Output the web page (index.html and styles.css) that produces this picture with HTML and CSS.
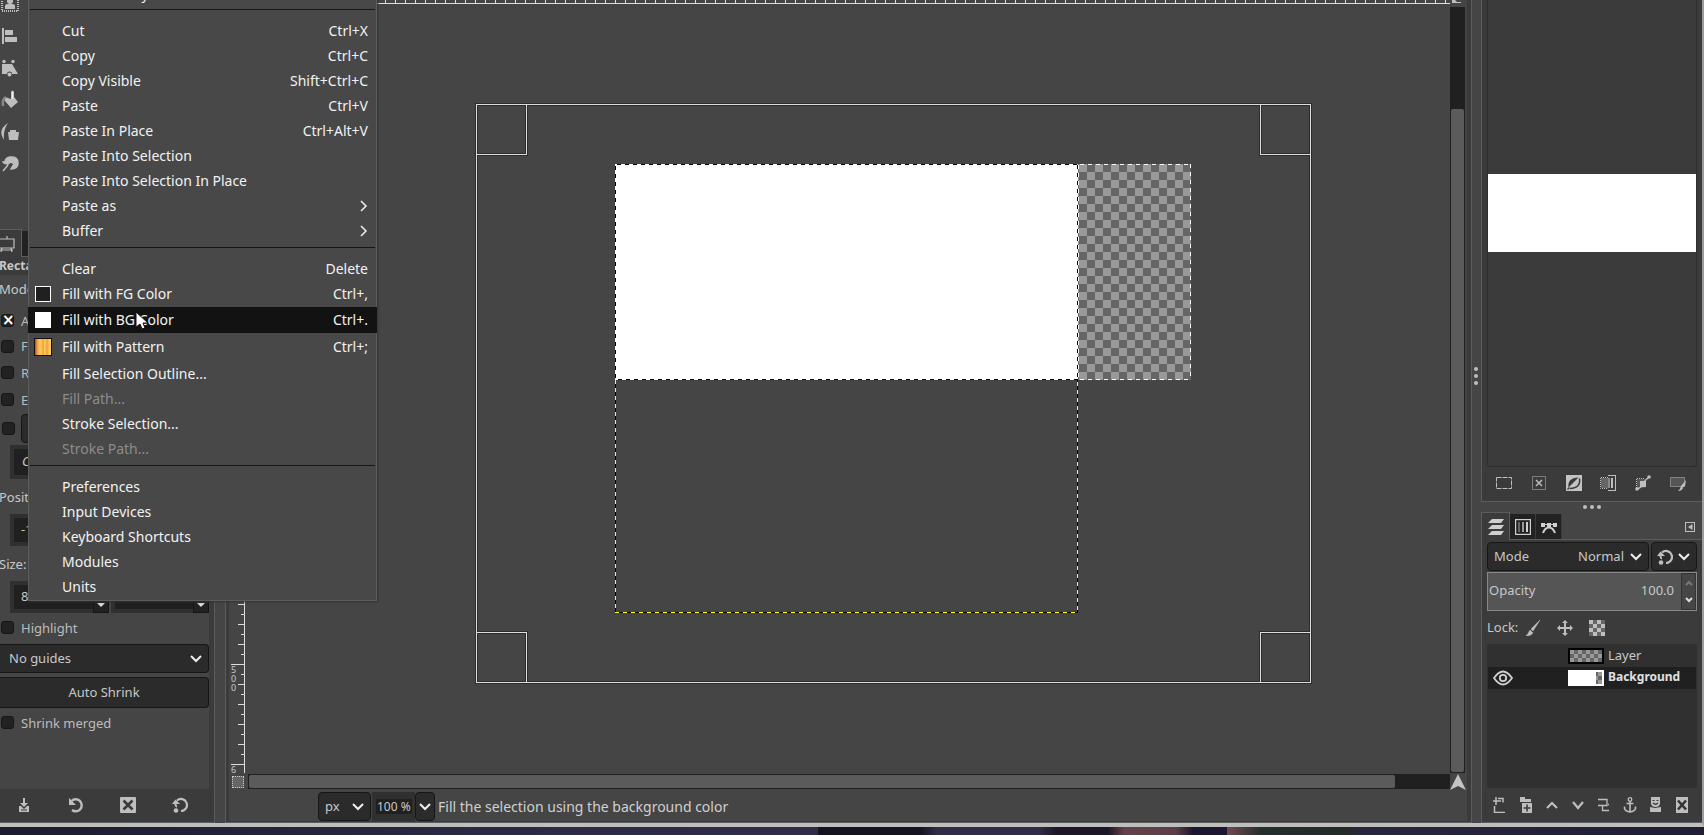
FILE: index.html
```html
<!DOCTYPE html>
<html lang="en">
<head>
<meta charset="utf-8">
<title>Image Editor</title>
<link rel="stylesheet" href="styles.css">
</head>
<body>
<svg class="defs" aria-hidden="true">
  <defs>
    <pattern id="checks" x="1079" y="164" width="16" height="16" patternUnits="userSpaceOnUse">
      <rect width="16" height="16" fill="#999"/><path d="M8 0h8v8H8zM0 8h8v8H0z" fill="#666"/>
    </pattern>
    <pattern id="smallChecks" x="2" y="2" width="8" height="8" patternUnits="userSpaceOnUse">
      <rect width="8" height="8" fill="#999"/><path d="M4 0h4v4H4zM0 4h4v4H0z" fill="#666"/>
    </pattern>
    <pattern id="ticks" x="7" y="0" width="10" height="4" patternUnits="userSpaceOnUse">
      <path d="M3 0h1v4H3z" fill="#ddd"/>
    </pattern>
    <pattern id="sideTicks" x="0" y="664" width="16" height="20" patternUnits="userSpaceOnUse">
      <path d="M9 0h6v1H9zM12 10h3v1h-3z" fill="#ddd"/>
    </pattern>
    <symbol id="chev" viewBox="0 0 12 8"><path d="M1 1l5 5 5-5" fill="none" stroke="#eee" stroke-width="2"/></symbol>
    <symbol id="reset" viewBox="0 0 16 16"><path d="M5 3.500A6 6 0 1 1 9 14" fill="none" stroke="#bebebe" stroke-width="2.200"/><path d="M0 7l3.500-4.500L8 7z" fill="#bebebe"/><path d="M3.500 5.500v2c0 1 1 2 1.500 2" fill="none" stroke="#bebebe" stroke-width="2"/><circle cx="4" cy="13.500" r="2.300" fill="#bebebe"/></symbol>
  </defs>
</svg>
<div class="window">
  <aside class="dock-left">
    <div class="tools">
      <button aria-label="Foreground select"><svg viewBox="0 0 20 20"><path d="M2 1v16h16V1" fill="none" stroke="#bebebe" stroke-width="2" stroke-dasharray="1 1"/><circle cx="10" cy="7" r="3" fill="#bebebe"/><path d="M5 15v-3q0-2 3-2h4q3 0 3 2v3z" fill="#bebebe"/></svg></button>
      <button aria-label="Align"><svg viewBox="0 0 20 20"><path d="M2 2h2v16H2zM5 4h8v5H5zM5 11h12v5H5z" fill="#bebebe"/></svg></button>
      <button aria-label="Transform"><svg viewBox="0 0 20 20"><path d="M2 6h10l6 10h-6a2.500 2.500 0 0 0-5 0H2z" fill="#bebebe"/><circle cx="4" cy="3.500" r="1.700" fill="#bebebe"/><circle cx="13" cy="3.500" r="1.700" fill="#bebebe"/><circle cx="9.500" cy="16.500" r="2" fill="#bebebe"/></svg></button>
      <button aria-label="Bucket fill"><svg viewBox="0 0 20 20"><path d="M5 7l6 2V2a1 1 0 0 1 3 0v5l4 5-7 6-6-7z" fill="#bebebe"/><path d="M6 7q-4 2-3 9" fill="none" stroke="#888" stroke-width="2.500"/><path d="M12.500 2v7" stroke="#eee" stroke-width="1.500"/></svg></button>
      <button aria-label="Clone"><svg viewBox="0 0 20 20"><path d="M8 1Q-3 8 4 18Q3 8 8 1zM10 8h6v2h3l-1 8h-9l-1-8h2z" fill="#bebebe"/></svg></button>
      <button aria-label="Smudge"><svg viewBox="0 0 20 20"><path d="M3 17l5-6M5 8q0-4 5-5 8-1 8 6 0 6-7 6l3-5-3-2-3 2q-4 0-5-2z" fill="#bebebe" stroke="#bebebe" stroke-width="1.500"/></svg></button>
    </div>
    <div class="tabs">
      <button class="tab active" aria-label="Tool options"><svg width="20" height="16" viewBox="0 0 20 16"><path d="M-1 3h15v9H-1zM7 0v3M2 12l-1 4M11 12l1 4M0 14h13" fill="none" stroke="#bebebe" stroke-width="1.200"/></svg></button>
      <button class="tab" aria-label="Devices"><svg width="14" height="16" viewBox="0 0 14 16"><path d="M1 13l4-9v9M2 9h3" fill="none" stroke="#bebebe" stroke-width="1.500"/></svg></button>
    </div>
    <div class="options">
      <h2>Rectangle Select</h2>
      <p class="mode-line">Mode:</p>
      <label class="check first"><input type="checkbox" checked>Antialiasing</label>
      <label class="check feather"><input type="checkbox">Feather edges</label>
      <label class="check"><input type="checkbox">Rounded corners</label>
      <label class="check"><input type="checkbox">Expand from center</label>
      <div class="check fixed"><input type="checkbox" aria-label="Fixed"><button>Fixed</button></div>
      <input class="entry current" aria-label="Current" value="Current">
      <label class="cap" for="posx">Position:</label>
      <input class="entry" id="posx" value="-1">
      <label class="cap" for="sizew">Size:</label>
      <div class="pair">
        <div class="spin"><input id="sizew" value="800"><button aria-label="Decrease width"></button></div>
        <div class="spin"><input aria-label="Height" value=""><button aria-label="Decrease height"></button></div>
      </div>
      <label class="check tall"><input type="checkbox">Highlight</label>
      <div class="select guides"><select aria-label="Guides"><option>No guides</option></select><svg class="chev"><use href="#chev"/></svg></div>
      <button class="shrink">Auto Shrink</button>
      <label class="check tall"><input type="checkbox">Shrink merged</label>
    </div>
    <div class="foot">
      <button aria-label="Save preset"><svg viewBox="0 0 16 16"><path d="M7 1h2v5h3L8 10 4 6h3zM3 9h2l3 3 3-3h2v6H3z" fill="#bebebe"/><path d="M5 13h6" stroke="#3b3b3b"/></svg></button>
      <button aria-label="Restore preset"><svg viewBox="0 0 16 16"><path d="M3.500 4A6 6 0 1 1 4 13" fill="none" stroke="#bebebe" stroke-width="2.400"/><path d="M1 1v7h7z" fill="#bebebe"/></svg></button>
      <button aria-label="Delete preset"><svg viewBox="0 0 16 16"><rect width="16" height="16" rx="1" fill="#bebebe"/><path d="M3.500 3.500l9 9M12.500 3.500l-9 9" stroke="#3b3b3b" stroke-width="2.600"/></svg></button>
      <button aria-label="Reset"><svg><use href="#reset"/></svg></button>
    </div>
  </aside>

  <main class="editor">
    <div class="view">
      <svg class="ruler-top"><rect width="100%" height="4" fill="url(#ticks)"/><path d="M0 3h3000v1H0z" fill="#ddd"/></svg>
      <div class="ruler-side">
        <svg viewBox="0 4 16 769" width="16" height="769"><rect y="4" width="16" height="769" fill="url(#sideTicks)"/><path d="M15 4h1v769h-1zM2 664h13v1H2zM2 764h13v1H2z" fill="#ddd"/>
          <g class="ruler-num"><text x="2" y="673">5</text><text x="2" y="682">0</text><text x="2" y="691">0</text><text x="2" y="773">6</text></g></svg>
      </div>
      <div class="canvas">
        <svg viewBox="245 4 1205 769" width="1205" height="769" shape-rendering="crispEdges">
          <g fill="none" stroke="#2c2c2c" stroke-width="3"><path d="M476.500 104.500h834v578h-834zM526.500 104.500v50h-50M1260.500 104.500v50h50M526.500 682.500v-50h-50M1260.500 682.500v-50h50"/></g>
          <path d="M476.500 104.500h834v578h-834zM526.500 104.500v50h-50M1260.500 104.500v50h50M526.500 682.500v-50h-50M1260.500 682.500v-50h50" fill="none" stroke="#ddd"/>
          <rect x="615" y="164" width="463" height="216" fill="#fff"/>
          <rect x="1078" y="164" width="113" height="216" fill="url(#checks)"/>
          <g fill="none" stroke-dasharray="4 4">
            <path d="M617 164.500h461M615.500 166v214M1077.500 165v215M618 379.500h460" stroke="#000"/>
            <path d="M1080 164.500h111M1190.500 164v216M1080 379.500h111M1078.500 165v215" stroke="#fff"/>
          </g>
          <path d="M615.500 380v232.500h462V380" fill="none" stroke="#000"/>
          <path d="M615.500 380v232M615 612.500h462M1077.500 382v230" fill="none" stroke="#ff0" stroke-dasharray="4 4"/>
        </svg>
      </div>
      <div class="vscroll">
        <svg class="zoomfit" viewBox="0 0 15 7"><path d="M2 3V0h3l2 2h4v1z" fill="#bebebe"/></svg>
        <div class="vtrack"><div class="vthumb"></div></div>
      </div>
      <button class="quickmask" aria-label="Quick mask"></button>
      <div class="htrack"><div class="hthumb"></div></div>
      <button class="nav" aria-label="Navigate"><svg width="16" height="16" viewBox="0 0 16 16"><path d="M8 0l8 16-8-4-8 4z" fill="#c4c4c4"/></svg></button>
    </div>
    <div class="status">
      <div class="select unit"><select aria-label="Unit"><option>px</option></select><svg class="chev"><use href="#chev"/></svg></div>
      <div class="zoombox"><input aria-label="Zoom" value="100 %"></div>
      <button class="zoomdrop" aria-label="Zoom levels"><svg class="chev"><use href="#chev"/></svg></button>
      <span class="message">Fill the selection using the background color</span>
    </div>
  </main>

  <div class="grip" aria-hidden="true"><i></i><i></i><i></i></div>

  <aside class="dock-right">
    <section class="panel selection">
      <div class="preview"><div class="preview-image"></div></div>
      <div class="icons six">
        <button aria-label="Select all"><svg viewBox="0 0 16 16"><rect x=".5" y="2.500" width="15" height="11" fill="none" stroke="#bebebe" stroke-dasharray="5 1"/></svg></button>
        <button aria-label="Select none"><svg viewBox="0 0 16 16"><rect x="1.500" y="1.500" width="13" height="13" fill="none" stroke="#bebebe" stroke-dasharray="1 1"/><path d="M5 5l6 6M11 5l-6 6" stroke="#bebebe" stroke-width="1.500"/></svg></button>
        <button aria-label="Invert"><svg viewBox="0 0 16 16"><rect width="16" height="16" fill="#c4c4c4"/><path d="M2.500 12.500Q1 3 12.500 2.500z" fill="#3b3b3b"/><path d="M13.500 3.500Q15 13 4 13.500M1.500 14.500l2-2" fill="none" stroke="#3b3b3b" stroke-width="1.500"/></svg></button>
        <button aria-label="Save to channel"><svg viewBox="0 0 16 16"><path d="M1 3h7v10H1z" fill="#666"/><path d="M8 2.500H.5v11H8" fill="none" stroke="#bebebe" stroke-dasharray="1 1"/><path d="M8 3h2v10H8z" fill="#888"/><path d="M11 3h2v10h-2zM8 0h8v16H8v-1h7V1H8z" fill="#bebebe"/></svg></button>
        <button aria-label="To path"><svg viewBox="0 0 16 16"><path d="M9 3.500H1.500v10" fill="none" stroke="#bebebe" stroke-dasharray="1 1"/><path d="M2 4h8v9H2z" fill="#555"/><path d="M2 14Q6 13 8 9t6-7" fill="none" stroke="#bebebe" stroke-width="1.500"/><path d="M5 6h6v6H5z" fill="#bebebe"/><circle cx="14" cy="2" r="1.800" fill="#bebebe"/><circle cx="2" cy="14" r="1.800" fill="#bebebe"/></svg></button>
        <button aria-label="Stroke selection"><svg viewBox="0 0 16 16"><rect x=".5" y="2.500" width="14" height="9" fill="#555" stroke="#bebebe" stroke-dasharray="1 1"/><path d="M16 5l-1 6-3 2-1-2zM11 11l2 2q-1 3-5 3 2-1 3-5z" fill="#bebebe"/></svg></button>
      </div>
    </section>
    <div class="hgrip" aria-hidden="true"><i></i><i></i><i></i></div>
    <section class="layers">
      <div class="tabs">
        <button class="tab active" aria-label="Layers"><svg width="16" height="16" viewBox="0 0 16 16"><path d="M4 0h12l-3 4H0zM4 6h12l-3 4H0zM4 12h12l-3 4H0z" fill="#cfcfcf"/></svg></button>
        <button class="tab" aria-label="Channels"><svg width="16" height="16" viewBox="0 0 16 16"><rect x=".6" y=".6" width="14.800" height="14.800" fill="none" stroke="#d0d0d0" stroke-width="1.200"/><path d="M3 3h2v10H3z" fill="#666"/><path d="M7 3h2v10H7z" fill="#999"/><path d="M11 3h2v10h-2z" fill="#d0d0d0"/></svg></button>
        <button class="tab" aria-label="Paths"><svg width="16" height="16" viewBox="0 0 16 16"><path d="M0 4h4v1h2V4h4v1h2V4h4v4h-4V6h-2v2H6V6H4v2H0z" fill="#cfcfcf"/><path d="M2 14Q4 8.500 8 8.500t6 5.500" fill="none" stroke="#cfcfcf" stroke-width="2"/></svg></button>
        <button class="dockmenu" aria-label="Configure this tab"><svg width="10" height="10" viewBox="0 0 10 10"><rect x=".5" y=".5" width="9" height="9" fill="none" stroke="#bebebe"/><path d="M7.500 2v6L3 5z" fill="#bebebe"/></svg></button>
      </div>
      <div class="layer-body">
        <div class="moderow">
          <div class="select modeselect"><label for="mode">Mode</label><select id="mode"><option>Normal</option></select><svg class="chev"><use href="#chev"/></svg></div>
          <button class="modeswitch" aria-label="Switch mode group"><svg width="16" height="16"><use href="#reset"/></svg><svg class="chev"><use href="#chev"/></svg></button>
        </div>
        <div class="opacity">
          <label for="opacity">Opacity</label><input id="opacity" value="100.0">
          <div class="updown"><button aria-label="Increase"><svg width="8" height="6" viewBox="0 0 8 6"><path d="M1 5l3-3 3 3" fill="none" stroke="#777" stroke-width="2"/></svg></button><button aria-label="Decrease"><svg width="8" height="6" viewBox="0 0 8 6"><path d="M1 1l3 3 3-3" fill="none" stroke="#ddd" stroke-width="2"/></svg></button></div>
        </div>
        <div class="lock"><span>Lock:</span>
          <button aria-label="Lock pixels"><svg viewBox="0 0 16 16"><path d="M15 0L6 9l2 2zM5 10l3 3q-2 3-7 3 2-2 4-6z" fill="#bebebe" stroke="#bebebe" stroke-width=".5"/></svg></button>
          <button aria-label="Lock position"><svg viewBox="0 0 16 16"><path d="M8 1v14M1 8h14" stroke="#bebebe" stroke-width="2"/><path d="M8 0l3 3H5zM8 16l3-3H5zM0 8l3-3v6zM16 8l-3-3v6z" fill="#bebebe"/></svg></button>
          <button aria-label="Lock alpha"><svg viewBox="0 0 16 16"><rect width="16" height="16" fill="#666"/><path d="M0 0h4v4H0zM8 0h4v4H8zM4 4h4v4H4zM12 4h4v4h-4zM0 8h4v4H0zM8 8h4v4H8zM4 12h4v4H4zM12 12h4v4h-4z" fill="#bebebe"/></svg></button>
        </div>
        <ul class="list">
          <li><span class="eye"></span><svg width="36" height="16"><rect width="36" height="16" fill="#000"/><rect x="2" y="2" width="32" height="12" fill="url(#smallChecks)"/></svg><span>Layer</span></li>
          <li class="current-layer"><span class="eye"><svg width="20" height="16" viewBox="0 0 20 16"><path d="M1 8q9-13 18 0-9 13-18 0z" fill="none" stroke="#cfcfcf" stroke-width="1.800"/><circle cx="10" cy="8" r="3.200" fill="none" stroke="#cfcfcf" stroke-width="1.800"/></svg></span><svg width="36" height="16"><rect width="36" height="16" fill="#fff"/><path d="M28 2h6v12h-6z" fill="#666"/><path d="M30 2h4v4h-4zM28 6h2v4h-2zM30 10h4v4h-4z" fill="#999"/></svg><span>Background</span></li>
        </ul>
        <div class="icons eight">
          <button aria-label="New layer"><svg viewBox="0 0 16 16"><path d="M6 1.500h5v4M1 4h8M4 0v8M2.500 9v6.500H13" fill="none" stroke="#bebebe" stroke-width="1.500"/></svg></button>
          <button aria-label="New group"><svg viewBox="0 0 16 16"><path d="M2 0h5v2h6v3H2zM4 6h10v10H4z" fill="#bebebe"/><path d="M9 7.500v7M5.500 11h7" stroke="#3b3b3b" stroke-width="1.600"/></svg></button>
          <button aria-label="Raise"><svg viewBox="0 0 16 16"><path d="M3 11l5-5 5 5" fill="none" stroke="#bebebe" stroke-width="2.200"/></svg></button>
          <button aria-label="Lower"><svg viewBox="0 0 16 16"><path d="M3 5l5 6 5-6" fill="none" stroke="#bebebe" stroke-width="2.200"/></svg></button>
          <button aria-label="Duplicate"><svg viewBox="0 0 16 16"><path d="M2 2.500h9v6H2M6.500 9v4.500H13M13 7.500h-1" fill="none" stroke="#bebebe" stroke-width="1.300"/></svg></button>
          <button aria-label="Anchor"><svg viewBox="0 0 16 16"><circle cx="8" cy="2.500" r="1.800" fill="none" stroke="#bebebe" stroke-width="1.300"/><path d="M8 4v11M4.500 6.500h7M2.500 9.500v2q1 3 5.500 3.500 4.500-.5 5.500-3.500v-2" fill="none" stroke="#bebebe" stroke-width="1.600"/></svg></button>
          <button aria-label="Add mask"><svg viewBox="0 0 16 16"><path d="M3 0h9v7q-1 3-4.500 3T3 7zM2 10l5 1 6-1v5H2z" fill="#bebebe"/><path d="M4.500 3.500h2M8.500 3.500h2M5 6q2.500 2.500 5 0" fill="none" stroke="#3b3b3b" stroke-width="1.200"/></svg></button>
          <button aria-label="Delete layer"><svg viewBox="0 0 16 16"><path d="M2 0h12v16H2z" fill="#bebebe"/><path d="M4 3.500l8 9M12 3.500l-8 9" stroke="#333" stroke-width="2.600"/></svg></button>
        </div>
      </div>
    </section>
  </aside>
</div>
<div class="wallpaper"></div>

<div class="menu" role="menu">
  <button role="menuitem">Undo History</button>
  <hr class="top">
  <button role="menuitem">Cut<kbd>Ctrl+X</kbd></button>
  <button role="menuitem">Copy<kbd>Ctrl+C</kbd></button>
  <button role="menuitem">Copy Visible<kbd>Shift+Ctrl+C</kbd></button>
  <button role="menuitem">Paste<kbd>Ctrl+V</kbd></button>
  <button role="menuitem">Paste In Place<kbd>Ctrl+Alt+V</kbd></button>
  <button role="menuitem">Paste Into Selection</button>
  <button role="menuitem">Paste Into Selection In Place</button>
  <button role="menuitem">Paste as<svg class="sub" viewBox="0 0 8 12"><path d="M1 1l5 5-5 5" fill="none" stroke="#eee" stroke-width="1.500"/></svg></button>
  <button role="menuitem">Buffer<svg class="sub" viewBox="0 0 8 12"><path d="M1 1l5 5-5 5" fill="none" stroke="#eee" stroke-width="1.500"/></svg></button>
  <hr>
  <button role="menuitem">Clear<kbd>Delete</kbd></button>
  <button role="menuitem" class="fgrow"><i class="swatch fg"></i>Fill with FG Color<kbd>Ctrl+,</kbd></button>
  <button role="menuitem" class="hot"><i class="swatch bg"></i>Fill with BG Color<kbd>Ctrl+.</kbd>
    <svg class="pointer" viewBox="0 0 14 20"><path d="M1 1v15l4-3 2 5 3-1-2-5h5z" fill="#fff" stroke="#111"/></svg></button>
  <button role="menuitem" class="pat"><i class="swatch wood"></i>Fill with Pattern<kbd>Ctrl+;</kbd></button>
  <button role="menuitem">Fill Selection Outline...</button>
  <button role="menuitem" disabled>Fill Path...</button>
  <button role="menuitem">Stroke Selection...</button>
  <button role="menuitem" disabled>Stroke Path...</button>
  <hr>
  <button role="menuitem">Preferences</button>
  <button role="menuitem">Input Devices</button>
  <button role="menuitem">Keyboard Shortcuts</button>
  <button role="menuitem">Modules</button>
  <button role="menuitem">Units</button>
</div>
</body>
</html>
```
FILE: styles.css
```css
* { box-sizing: border-box; }
html, body { height: 100%; }
body {
  margin: 0;
  display: flex;
  flex-direction: column;
  position: relative;
  overflow: hidden;
  background: #454545;
  color: #c8c8c8;
  font: 13px/16px "Noto Sans", "Open Sans", sans-serif;
}
button, input, select {
  font: inherit;
  color: inherit;
  background: none;
  border: 0;
  padding: 0;
  margin: 0;
  outline: 0;
  border-radius: 0;
  appearance: none;
}
svg { display: block; flex: none; }
.defs { position: absolute; width: 0; height: 0; }
.chev { width: 12px; height: 8px; pointer-events: none; }

.window {
  flex: 1;
  min-height: 0;
  display: flex;
  border-bottom: 4px solid #bcbfbc;
  border-right: 2px solid #9c9c9c;
}
.wallpaper {
  height: 8px;
  flex: none;
  background: linear-gradient(90deg, #1c1c30 0, #2c2944 30%, #302c48 48%, #15131f 48%, #15131f 54%, #302c48 55%, #302c48 61%, #1c1626 62%, #1c1626 65%, #64414a 66%, #5c3d48 69%, #1c1630 70%, #1c1630 72%, #704850 72%, #242e2c 74%, #222a28 79%, #28253e 80%, #201e34 100%);
}

/* left dock */
.dock-left {
  width: 215px;
  flex: none;
  display: flex;
  flex-direction: column;
  background: #3b3b3b;
  border-right: 1px solid #5c5c5c;
  border-bottom: 1px solid #5c5c5c;
  overflow: hidden;
}
.tools { height: 229px; padding-right: 5px; overflow: hidden; flex: none; background: #454545; display: flex; flex-direction: column; justify-content: flex-start; }
.tools button { height: 32px; width: 20px; flex: none; }
.tools button:first-child { margin-top: -12px; }
.tools svg { width: 20px; height: 20px; }
.tabs { display: flex; height: 28px; flex: none; align-items: flex-end; background: #454545; border-bottom: 1px solid #5c5c5c; }
.tab { height: 25px; width: 26px; background: #222; display: flex; align-items: center; justify-content: center; border-right: 1px solid #3b3b3b; }
.tab.active { height: 28px; margin-bottom: -1px; background: #3b3b3b; border: 1px solid #5c5c5c; border-bottom: 0; }
.dock-left .tab.active { width: 22px; border-left: 0; justify-content: flex-start; }
.options { flex: 1; margin-right: 5px; background: #454545; min-height: 0; white-space: nowrap; }
.options h2 { margin: 0; background: #3b3b3b; font-size: 12px; line-height: 18px; text-indent: -1px; }
.mode-line { margin: 0; line-height: 29px; padding-bottom: 4px; text-indent: -1px; }
.check { display: flex; align-items: center; gap: 7px; height: 27px; padding-left: 1px; color: #bcbcbc; }
.check.first { height: 25px; }
.check.feather { height: 26px; }
.check.fixed { height: 30px; padding-left: 2px; gap: 6px; }
.check.fixed button { height: 29px; flex: 1; background: #2b2b2b; border: 1px solid #161616; border-radius: 4px; }
.check.tall { height: 29px; }
.check input { width: 13px; height: 13px; flex: none; background: #222; border: 1px solid #161616; border-radius: 3px; display: grid; place-items: center; }
.check input:checked::before { content: "×"; color: #fff; font: bold 15px/11px "DejaVu Sans", sans-serif; }
.entry, .spin { display: block; background: #202020; border: 4px solid #303030; height: 32px; width: 199px; margin-left: 10px; padding-left: 7px; padding-bottom: 2px; }
.entry.current { margin-top: 2px; height: 34px; font-style: italic; padding-left: 8px; }
.cap { display: block; height: 35px; line-height: 37px; text-indent: -1px; }
.pair { display: flex; gap: 2px; margin-left: 10px; }
.spin { flex: 1; min-width: 0; width: auto; margin: 0; display: flex; position: relative; }
.spin input { width: 60px; }
.spin button { position: absolute; right: -4px; bottom: -4px; width: 16px; height: 16px; background: #222; border: 1px solid #161616; display: grid; place-items: center; }
.spin button::before { content: ""; border: 4px solid transparent; border-top-color: #ddd; border-bottom: 0; }
.select { position: relative; background: #2b2b2b; border: 1px solid #161616; border-radius: 4px; display: flex; align-items: center; }
.select select { flex: 1; min-width: 0; height: 100%; padding: 0 0 2px 9px; }
.select .chev { position: absolute; right: 6px; }
.guides { height: 29px; margin: 2px 0 4px; border-left: 0; border-radius: 0 4px 4px 0; }
.shrink { display: block; width: 100%; height: 31px; padding-bottom: 2px; background: #2b2b2b; border: 1px solid #161616; border-left: 0; border-radius: 0 4px 4px 0; }
.foot { height: 33px; flex: none; display: grid; grid-template-columns: repeat(4, 52px); padding-bottom: 2px; margin-left: -2px; }
.foot button { display: grid; place-items: center; }
.foot svg { width: 16px; height: 16px; }

/* image window */
.editor {
  flex: 1;
  min-width: 0;
  display: flex;
  flex-direction: column;
  margin-left: 10px;
  border: 1px solid #5c5c5c;
  border-top: 0;
  padding: 0 4px 1px 3px;
  background: #3b3b3b;
}
.view {
  flex: 1;
  min-height: 0;
  background: #454545;
  display: grid;
  grid-template-columns: 16px minmax(0, 1fr) 15px 2px;
  grid-template-rows: 4px minmax(0, 1fr) 17px;
}
.ruler-top { grid-column: 2; grid-row: 1; width: 100%; height: 4px; }
.ruler-side { grid-column: 1; grid-row: 1 / 3; overflow: hidden; padding-top: 4px; }
.ruler-num { font: 9px "Noto Sans", sans-serif; fill: #c8c8c8; }
.canvas { grid-column: 2; grid-row: 2; overflow: hidden; }
.vscroll { grid-column: 3; grid-row: 1 / 3; display: flex; flex-direction: column; }
.zoomfit { width: 15px; height: 7px; }
.vtrack { flex: 1; min-height: 0; background: #202020; padding: 102px 1px 1px; }
.vthumb { height: 100%; background: #5b5b5b; border-radius: 2px; }
.quickmask { grid-column: 1; grid-row: 3; align-self: center; margin-left: 3px; width: 12px; height: 12px; background: #666; border: 1px dotted #ccc; }
.htrack { grid-column: 2; grid-row: 3; margin: 1px 0 1px 3px; background: #202020; padding: 1px 55px 1px 1px; }
.hthumb { height: 100%; background: #5b5b5b; border-radius: 2px; }
.nav { grid-column: 3 / 5; grid-row: 3; }
.status { height: 31px; flex: none; display: flex; align-items: flex-start; padding: 2px 0 0 89px; background: #454545; }
.unit { width: 53px; height: 29px; margin-right: 1px; }
.unit select { padding-left: 6px; }
.zoombox { width: 43px; height: 29px; background: #303030; padding: 7px 4px 7px; }
.zoombox input { display: block; width: 36px; height: 15px; background: #202020; font-size: 12px; text-indent: 1px; }
.zoomdrop { width: 20px; height: 29px; background: #2b2b2b; border: 1px solid #161616; border-radius: 4px; display: grid; place-items: center; }
.message { font-size: 14px; line-height: 29px; padding-left: 3px; color: #d0d0d0; white-space: nowrap; }

.grip { width: 9px; flex: none; display: flex; flex-direction: column; gap: 3px; align-items: center; justify-content: center; padding: 0 1px 71px 0; }
.grip i, .hgrip i { width: 4px; height: 4px; border-radius: 2px; background: #bebebe; }

/* right dock */
.dock-right { width: 221px; flex: none; display: flex; flex-direction: column; }
.selection { flex: none; height: 502px; border: 1px solid #5c5c5c; border-width: 0 0 1px 1px; background: #3b3b3b; padding: 0 5px; display: flex; flex-direction: column; }
.preview { flex: 1; border: 1px solid #2e2e2e; border-top: 0; border-radius: 0 0 3px 3px; padding-top: 174px; }
.preview-image { height: 78px; background: #fff; }
.icons { display: grid; height: 34px; }
.icons button { display: grid; place-items: center; }
.icons svg { width: 16px; height: 16px; }
.six { grid-template-columns: repeat(6, 1fr); padding: 0 2px 2px 0; }
.eight { grid-template-columns: repeat(8, 1fr); flex: none; padding-right: 2px; }
.hgrip { height: 10px; flex: none; display: flex; gap: 3px; justify-content: center; align-items: center; padding-bottom: 1px; }
.layers { flex: 1; min-height: 0; display: flex; flex-direction: column; border-left: 1px solid #5c5c5c; border-bottom: 1px solid #5c5c5c; }
.layers .tab.active { width: 28px; border-left: 0; }
.dockmenu { margin: 0 7px 7px auto; }
.layer-body { flex: 1; min-height: 0; display: flex; flex-direction: column; background: #3b3b3b; padding: 2px 5px 0; }
.moderow { display: flex; gap: 2px; height: 29px; flex: none; }
.modeselect { flex: 1; }
.modeselect label { padding: 0 0 2px 6px; }
.modeselect select { text-align: right; text-align-last: right; padding-right: 24px; }
.modeswitch { width: 46px; background: #2b2b2b; border: 1px solid #161616; border-radius: 4px; display: flex; align-items: center; justify-content: space-between; padding: 0 6px 0 5px; }
.opacity { height: 39px; flex: none; margin-top: 1px; background: #555; border: 1px solid #888; display: flex; align-items: center; padding-left: 1px; }
.opacity label { padding-bottom: 3px; }
.opacity input { flex: 1; min-width: 0; text-align: right; padding: 0 7px 3px 0; }
.updown { width: 15px; height: 37px; border: 1px solid #333; background: #464646; display: grid; grid-template-rows: 1fr 1fr; }
.updown button { display: grid; place-items: center; }
.lock { height: 33px; flex: none; display: flex; align-items: center; }
.lock span { width: 38px; padding-bottom: 1px; }
.lock button { width: 16px; height: 16px; margin-right: 16px; }
.list { flex: 1; min-height: 0; list-style: none; margin: 0; padding: 1px; background: #303030; border-radius: 3px; }
.list li { height: 22px; display: flex; align-items: center; gap: 4px; }
.list li > span:last-child { padding-bottom: 2px; }
.eye { width: 76px; padding-left: 5px; }
.current-layer { background: #202020; font-size: 12px; font-weight: bold; color: #e0e0e0; }

/* context menu */
.menu {
  position: absolute;
  left: 28px;
  top: -19px;
  width: 349px;
  background: #484848;
  border: 1px solid #5c5c5c;
  border-top: 0;
  padding-bottom: 1px;
  color: #f2f2f2;
  font-size: 14px;
  box-shadow: 1px 1px 2px #333;
}
.menu > button { position: relative; display: flex; align-items: center; width: 100%; height: 25px; padding: 0 8px 0 33px; text-align: left; white-space: nowrap; }
.menu > button:disabled { color: #8c8c8c; }
.menu kbd { margin-left: auto; font: inherit; }
.menu hr { height: 1px; margin: 4px 1px 8px; border: 0; background: #161616; }
.menu .top { margin-top: 3px; }
.menu > .fgrow { height: 26px; }
.menu > .hot { height: 26px; width: 349px; margin: 0 -1px; padding: 0 9px 0 34px; background: #121212; }
.menu > .pat { height: 28px; }
.sub { width: 8px; height: 12px; margin-left: auto; }
.swatch { position: absolute; left: 6px; width: 16px; height: 16px; }
.fg { background: #202020; border: 1px solid #fff; }
.bg { left: 7px; background: #fff; }
.wood { width: 18px; height: 18px; left: 5px; border: 1px solid #111; background: linear-gradient(90deg, #a85020 0, #f0a040 15%, #ffc860 30%, #ffb850 45%, #e89838 50%, #ffc860 60%, #f0a040 75%, #ffc860 90%); }
.pointer { position: absolute; left: 107px; top: 4px; width: 14px; height: 20px; }
```
